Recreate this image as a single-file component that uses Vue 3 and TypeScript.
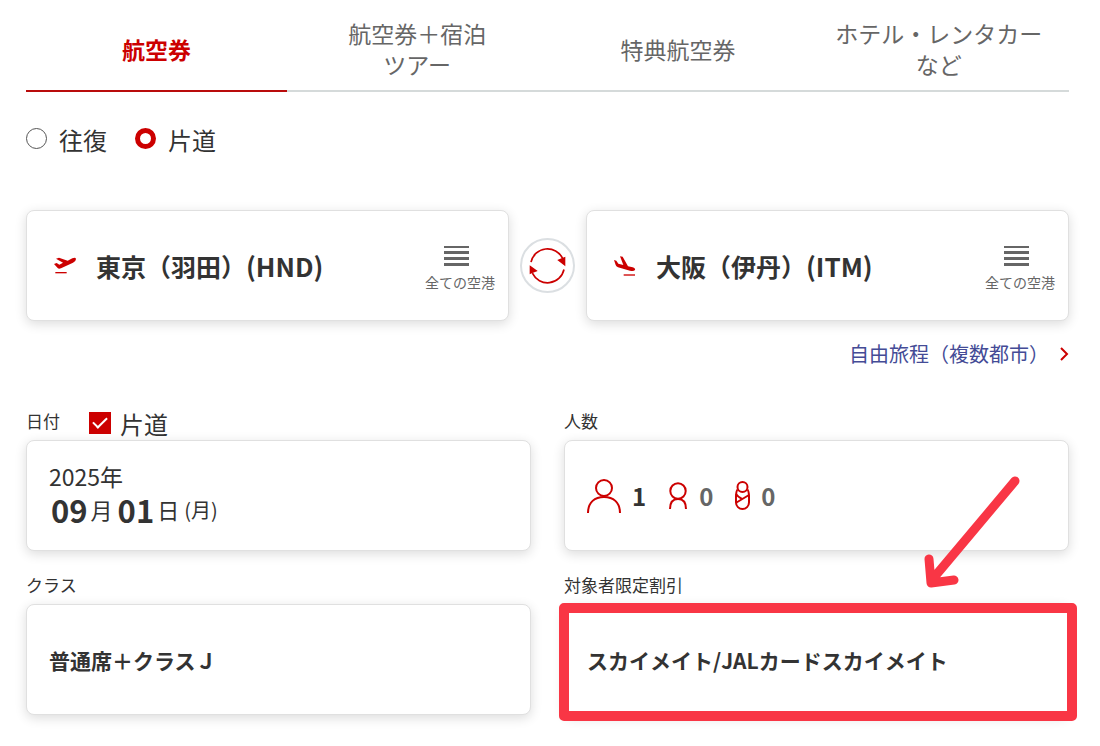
<script setup lang="ts">
import { ref } from 'vue'

interface Tab {
  id: string
  lines: string[]
}

interface Airport {
  id: 'departure' | 'arrival'
  name: string
  code: string
}

const tabs: Tab[] = [
  { id: 'flight', lines: ['航空券'] },
  { id: 'tour', lines: ['航空券＋宿泊', 'ツアー'] },
  { id: 'award', lines: ['特典航空券'] },
  { id: 'hotel', lines: ['ホテル・レンタカー', 'など'] },
]
const activeTab = ref('flight')
const trip = ref<'round' | 'oneway'>('oneway')
const oneWay = ref(true)

const airports = ref<Airport[]>([
  { id: 'departure', name: '東京（羽田）', code: 'HND' },
  { id: 'arrival', name: '大阪（伊丹）', code: 'ITM' },
])

function swapAirports(): void {
  const [from, to] = airports.value
  airports.value = [
    { ...to, id: 'departure' },
    { ...from, id: 'arrival' },
  ]
}
</script>

<template>
  <form class="search" lang="ja" @submit.prevent>
    <div class="tabs" role="tablist">
      <button
        v-for="tab in tabs"
        :key="tab.id"
        type="button"
        role="tab"
        class="tab"
        :class="{ active: tab.id === activeTab }"
        :aria-selected="tab.id === activeTab"
        @click="activeTab = tab.id"
      >
        <span v-for="line in tab.lines" :key="line" class="tab-line">{{ line }}</span>
      </button>
    </div>

    <div class="trip" role="radiogroup">
      <label class="choice">
        <input v-model="trip" class="radio" type="radio" name="trip" value="round" />
        <span>往復</span>
      </label>
      <label class="choice">
        <input v-model="trip" class="radio" type="radio" name="trip" value="oneway" />
        <span>片道</span>
      </label>
    </div>

    <div class="route">
      <template v-for="airport in airports" :key="airport.id">
        <div class="card airport" :class="airport.id">
          <button type="button" class="airport-name">
            <svg v-if="airport.id === 'departure'" class="plane" viewBox="135 161 72 72" aria-hidden="true">
              <path
                d="M135 191 143 188 151 193 162 187 141 175 150 172 176 181 190 174Q200 170 201 176 201 182 192 187L156 204Q149 207 146 203Z"
              />
              <path d="M139 215h34v4h-34z" />
            </svg>
            <svg v-else class="plane" viewBox="643 163 72 72" aria-hidden="true">
              <path
                d="M643 181 650 183 656 192 671 196 661 170 669 171 685 200 699 203Q708 206 706 211 702 216 691 213L655 203Q649 200 648 196Z"
              />
              <path d="M672 224h34v4h-34z" />
            </svg>
            <span>{{ airport.name }}<span class="code">({{ airport.code }})</span></span>
          </button>
          <button type="button" class="all-airports">
            <svg class="bars" viewBox="0 0 25 20" aria-hidden="true">
              <path d="M0 0h25v2H0zM0 5h25v3H0zM0 11h25v3H0zM0 17h25v3H0z" />
            </svg>
            <span>全ての空港</span>
          </button>
        </div>
        <button
          v-if="airport.id === 'departure'"
          type="button"
          class="swap"
          aria-label="出発地と到着地を入れ替える"
          @click="swapAirports"
        >
          <svg viewBox="384 139 116 116" aria-hidden="true">
            <g fill="none" stroke="currentColor" stroke-width="5">
              <path d="M393 187A50 50 0 0 1 487 176" />
              <path d="M491 209A50 50 0 0 1 397 220" />
            </g>
            <path fill="currentColor" d="M495 171v28l-24-18zM389 196v27l6-3 18-7z" />
          </svg>
        </button>
      </template>
    </div>

    <div class="multi">
      <a href="#multi-city" class="multi-link">
        <span>自由旅程（複数都市）</span>
        <svg class="chevron" viewBox="0 0 10 14" aria-hidden="true">
          <path d="M2 1l6 6-6 6" />
        </svg>
      </a>
    </div>

    <div class="fields">
      <div class="field">
        <div class="field-head">
          <label for="date">日付</label>
          <label class="choice one-way">
            <input v-model="oneWay" class="check" type="checkbox" />
            <span>片道</span>
          </label>
        </div>
        <button id="date" type="button" class="card field-card">
          <span class="date">
            <span class="year">2025年</span>
            <span class="day">
              <span class="part"><b>09</b>月</span>
              <span class="part"><b>01</b>日</span>
              <span class="weekday">(月)</span>
            </span>
          </span>
        </button>
      </div>

      <div class="field">
        <div class="field-head"><label for="people">人数</label></div>
        <button id="people" type="button" class="card field-card people">
          <span class="person">
            <svg class="adult" viewBox="0 0 34 34" aria-hidden="true">
              <circle cx="17" cy="9" r="8" />
              <path d="M1 34C1 23 8 18 17 18s16 5 16 16" />
            </svg>
            <b>1</b>
          </span>
          <span class="person none">
            <svg class="child" viewBox="0 0 18 27" aria-hidden="true">
              <circle cx="9" cy="9" r="7.700" />
              <path d="M1 27c0-7 3-10 8-10s8 3 8 10" />
            </svg>
            <b>0</b>
          </span>
          <span class="person none">
            <svg class="infant" viewBox="0 0 15 29" aria-hidden="true">
              <circle cx="7.500" cy="6" r="5" />
              <path d="M2.500 8.500C.5 11 1 14 1 21.500a6.500 6.500 0 0 0 13 0c0-7.500.5-10.500-1.500-13" />
              <path d="M1 13c2 3 4 4 6 5M14 14 1.500 21.500" />
            </svg>
            <b>0</b>
          </span>
        </button>
      </div>

      <div class="field">
        <div class="field-head"><label for="cabin">クラス</label></div>
        <button id="cabin" type="button" class="card field-card value">普通席＋クラスＪ</button>
      </div>

      <div class="field discount">
        <div class="field-head"><label for="discount">対象者限定割引</label></div>
        <div class="highlighted">
          <button id="discount" type="button" class="card field-card value">
            スカイメイト/JALカードスカイメイト
          </button>
          <div class="frame" aria-hidden="true"></div>
          <svg class="arrow" viewBox="0 0 102 120" aria-hidden="true">
            <path d="M94 8 10 108M8 86l2 24 23-3" />
          </svg>
        </div>
      </div>
    </div>
  </form>
</template>

<style>
body {
  margin: 0;
  background: #fff;
}
</style>

<style scoped>
.search {
  padding: 0 31px 30px 26px;
  color: #333;
  font-family: 'Noto Sans CJK JP', sans-serif;
}

.search,
.search * {
  box-sizing: border-box;
}

button {
  margin: 0;
  padding: 0;
  border: 0;
  background: none;
  color: inherit;
  font: inherit;
  text-align: left;
  cursor: pointer;
}

svg {
  display: block;
  flex: none;
}

.tabs {
  display: grid;
  grid-template-columns: repeat(4, 1fr);
}

.tab {
  display: flex;
  flex-direction: column;
  align-items: center;
  justify-content: center;
  padding: 18px 0 10px;
  border-bottom: 2px solid #d5dada;
  color: #666;
  font-size: 23px;
  line-height: 31px;
}

.tab.active {
  border-color: #b90c0c;
  color: #c00;
  font-weight: 700;
}

.tab-line {
  white-space: nowrap;
}

.trip {
  display: flex;
  gap: 28px;
  margin-top: 30px;
}

.choice {
  display: flex;
  align-items: center;
  gap: 12px;
  font-size: 24px;
  line-height: 36px;
}

.radio {
  appearance: none;
  width: 21px;
  height: 21px;
  margin: 0 0 4px;
  border: 1px solid #555;
  border-radius: 50%;
  background: #fff;
}

.radio:checked {
  border: 5px solid #c00;
}

.route {
  display: grid;
  grid-template-columns: 1fr auto 1fr;
  align-items: center;
  gap: 11px;
  margin-top: 52px;
}

.card {
  border: 1px solid #e0e0e0;
  border-radius: 8px;
  background: #fff;
  box-shadow: 0 3px 12px rgba(0, 0, 0, 0.14);
}

.airport {
  display: flex;
  align-items: center;
  justify-content: space-between;
  min-height: 111px;
  padding: 0 13px 0 27px;
}

.airport-name {
  display: flex;
  align-items: center;
  gap: 18px;
  font-size: 25px;
  font-weight: 700;
  line-height: 36px;
}

.code {
  font-size: 26px;
}

.plane {
  width: 24px;
  height: 24px;
  fill: #c00;
}

.all-airports {
  display: flex;
  flex-direction: column;
  align-items: center;
  gap: 6px;
  padding-top: 6px;
  color: #666;
  font-size: 14px;
  line-height: 20px;
}

.bars {
  width: 25px;
  height: 20px;
  margin-right: 8px;
  fill: #666;
}

.swap {
  display: grid;
  place-items: center;
  width: 55px;
  height: 55px;
  border: 2px solid #dbdfe2;
  border-radius: 50%;
  background: #fff;
  color: #c00;
}

.swap svg {
  width: 39px;
  height: 39px;
}

.multi {
  display: flex;
  justify-content: flex-end;
  margin-top: 18px;
}

.multi-link {
  display: flex;
  align-items: center;
  gap: 10px;
  color: #444b96;
  font-size: 20px;
  line-height: 30px;
  text-decoration: none;
}

.chevron {
  width: 10px;
  height: 14px;
  fill: none;
  stroke: #c00;
  stroke-width: 2;
}

.fields {
  display: grid;
  grid-template-columns: 1fr 1fr;
  gap: 19px 33px;
  margin-top: 37px;
}

.field-head {
  display: flex;
  align-items: flex-start;
  gap: 29px;
  height: 34px;
  font-size: 17px;
  line-height: 30px;
}

.one-way {
  gap: 9px;
}

.check {
  appearance: none;
  display: grid;
  place-items: center;
  width: 22px;
  height: 22px;
  margin: 0 0 2px;
  border: 1px solid #c00;
  background: #fff;
}

.check:checked {
  background: #c00;
}

.check:checked::after {
  width: 12px;
  height: 6px;
  margin-bottom: 4px;
  border: solid #fff;
  border-width: 0 0 2px 2px;
  content: '';
  transform: rotate(-45deg);
}

.field-card {
  display: flex;
  align-items: center;
  width: 100%;
  min-height: 111px;
  padding: 0 22px;
}

.value {
  font-size: 21px;
  font-weight: 700;
}

.date {
  display: flex;
  flex-direction: column;
  padding-bottom: 5px;
  font-size: 22px;
  line-height: 33px;
}

.year {
  font-size: 23px;
}

.day {
  display: flex;
  align-items: center;
  gap: 5px;
  padding-left: 2px;
}

.part {
  display: flex;
  align-items: center;
  gap: 3px;
}

.part b {
  font-size: 31px;
}

.weekday {
  font-size: 20px;
}

.people {
  gap: 22px;
}

.person {
  display: flex;
  align-items: center;
  gap: 11px;
  font-size: 24px;
  line-height: 36px;
}

.person svg {
  fill: none;
  stroke: #c00;
  stroke-width: 2;
}

.none b {
  color: #666;
}

.adult {
  width: 34px;
  height: 34px;
}

.child {
  width: 20px;
  height: 27px;
}

.infant {
  width: 15px;
  height: 29px;
}

.highlighted {
  position: relative;
}

.frame {
  position: absolute;
  inset: -1px -8px -6px -5px;
  border: 10px solid #f93645;
  border-radius: 5px;
  pointer-events: none;
}

.arrow {
  position: absolute;
  right: 46px;
  bottom: 100%;
  width: 102px;
  height: 120px;
  margin-bottom: 11px;
  fill: none;
  stroke: #f93645;
  stroke-width: 9;
  stroke-linecap: round;
  stroke-linejoin: round;
  pointer-events: none;
}
</style>
